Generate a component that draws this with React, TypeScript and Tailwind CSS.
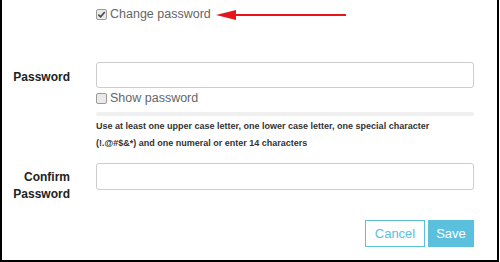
const FONT = { fontFamily: "'Liberation Sans', Arial, sans-serif" }

function Box({ checked }: { checked?: boolean }) {
  return (
    <span className="inline-flex h-[11px] w-[11px] items-center justify-center rounded-[2px] border border-[#9a9a9a] bg-[#e9e9e9] shrink-0">
      {checked && (
        <svg viewBox="0 0 10 10" className="h-[9px] w-[9px]">
          <path d="M1.5 5.2 L4 7.6 L8.6 2.2" fill="none" stroke="#4a4a4a" strokeWidth="1.8" />
        </svg>
      )}
    </span>
  )
}

export default function App() {
  return (
    <div className="w-[499px] h-[262px] bg-white border-l-2 border-r-2 border-b-2 border-black text-[#555]" style={FONT}>
      {/* Change password toggle */}
      <div className="flex items-center pl-[94px] pt-[8px] h-[21px]">
        <Box checked />
        <span className="ml-[3px] text-[12.5px] leading-none text-[#666]">Change password</span>
        <svg width="130" height="12" viewBox="0 0 130 12" className="ml-[5px]">
          <polygon points="0,6 20,1 20,11" fill="#e8141b" />
          <line x1="18" y1="6" x2="130" y2="6" stroke="#e8141b" strokeWidth="2" />
        </svg>
      </div>

      {/* Password */}
      <div className="flex mt-[41px]">
        <div className="w-[68px] shrink-0 text-right text-[12px] font-bold text-[#222] pt-[6px]">Password</div>
        <div className="ml-[26px] w-[378px]">
          <div className="h-[26px] rounded-[3px] border border-[#ccc] bg-white" />
          <label className="flex items-center mt-[4px] h-[13px]">
            <Box />
            <span className="ml-[3px] text-[12.5px] leading-none text-[#666]">Show password</span>
          </label>
          <div className="mt-[7px] h-[4px] rounded-full bg-[#f0f0f0]" />
          <p className="mt-[2px] text-[9px] font-bold leading-[17px] text-[#333]">
            Use at least one upper case letter, one lower case letter, one special character
            <br />
            (!.@#$&*) and one numeral or enter 14 characters
          </p>
        </div>
      </div>

      {/* Confirm password */}
      <div className="flex mt-[11px]">
        <div className="w-[68px] shrink-0 text-right text-[12px] font-bold leading-[17px] text-[#222] pt-[6px]">
          Confirm
          <br />
          Password
        </div>
        <div className="ml-[26px] w-[378px]">
          <div className="h-[27px] rounded-[3px] border border-[#ccc] bg-white" />
        </div>
      </div>

      {/* Actions */}
      <div className="flex justify-end gap-[3px] pr-[23px] mt-[17px]">
        <button className="h-[27px] w-[60px] border border-[#5bc0de] bg-white text-[13px] text-[#5bc0de]">Cancel</button>
        <button className="h-[27px] w-[46px] bg-[#5bc0de] text-[13px] text-white">Save</button>
      </div>
    </div>
  )
}
